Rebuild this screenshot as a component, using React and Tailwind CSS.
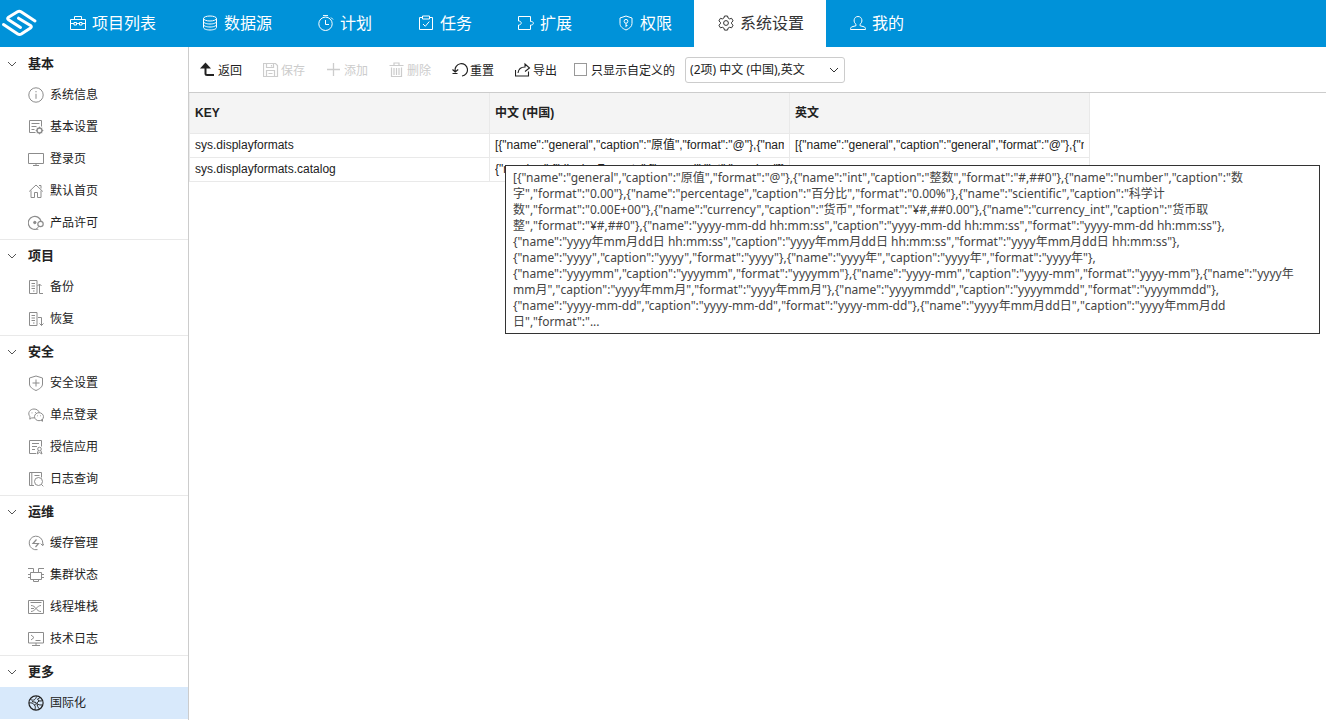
import React from "react";

const ICONS = {
  briefcase: (<><path d="M.5 4.500h15v10H.5zM4.500 4.500v-3h7v3M.5 8.500h3.500M6.500 8.500h3M12 8.500h3.500M4 7.500h2.500v2.500H4zM9.500 7.500H12v2.500H9.500z" /></>),
  database: (<><ellipse cx="8" cy="3.500" rx="6.500" ry="2.500" /><path d="M1.500 3.500v9c0 1.400 2.900 2.500 6.500 2.500s6.500-1.100 6.500-2.500v-9M1.500 6.500C1.500 7.900 4.400 9 8 9s6.500-1.100 6.500-2.500M1.500 9.500C1.500 10.900 4.400 12 8 12s6.500-1.100 6.500-2.500" /></>),
  timer: (<><circle cx="7.500" cy="8.800" r="6.700" /><path d="M5 .6h5M7.500 5v4.500H11M13 2.500l2 2" /></>),
  clipboard: (<><path d="M4.500 2.500h-3v12h13v-12h-3M4.500 1h7v3h-7zM5 9l2.300 2.300L11.300 6.500" /></>),
  plugin: (<><path d="M.5 6V1.500h12v5M12.500 10v4.500H.5V10M.5 6c3.600-.2 3.600 4.200 0 4M12.500 6.500c3.800-.7 3.800 4.200 0 3.500" /></>),
  shieldKey: (<><path d="M8 1l6 2v5.500c0 3-2.500 5-6 6.500-3.500-1.500-6-3.500-6-6.500V3z" /><circle cx="8" cy="6.300" r="1.900" /><path d="M8 8.200v4M8 10.500h1.500" /></>),
  gear: (<><path d="M6.500 1h3l.6 2 1.500.9 2-.6 1.500 2.600L13.600 7.300v1.500l1.500 1.400-1.500 2.600-2-.5-1.500.8-.6 2h-3l-.6-2-1.500-.8-2 .5L.9 10.200l1.500-1.400V7.300L.9 5.900l1.500-2.600 2 .6L5.900 3z" /><circle cx="8" cy="8" r="2.400" /></>),
  user: (<><path d="M6 9.300C3 7.500 3.500 1.500 8 1.500s5 6 2 7.800v1.400l4 1.100c1 .4 1.500 1 1.500 2.700H.5c0-1.700.5-2.300 1.500-2.700l4-1.100z" /></>),
  info: (<><circle cx="8" cy="8" r="7.200" /><path d="M8 6.800v5M8 4v1.300" /></>),
  form: (<><path d="M7.500 13.500H1.500V1.500h12v6M3.500 4.500h8M3.500 7.500h5M3.500 10.500h3" /><circle cx="11.500" cy="11.500" r="2.500" strokeWidth="1.400" /><path d="M11.500 7.700v1.500M11.500 13.800v1.500M7.700 11.500h1.500M13.800 11.500h1.500M8.900 8.900l1 1M13.100 13.100l1 1M14.100 8.900l-1 1M9.900 13.100l-1 1" /></>),
  monitor: (<><path d="M.5 2.500h15v10H.5zM8 12.500v2M5 14.500h6" /></>),
  home: (<><path d="M1.200 8.500L8 2l6.800 6.500M3 7.500V14.500h3.500v-5h3v5H13V7.500M11 2.500h2v3" /></>),
  license: (<><path d="M9 14A6.500 6.500 0 1 1 13 6" strokeWidth="1.200" /><circle cx="6.800" cy="7.500" r="1.200" fill="currentColor" /><circle cx="12.500" cy="9" r="2.700" strokeWidth="1.200" /><path d="M11 11.300L7.500 15M9 13.500l1.200 1.500" /></>),
  backup: (<><path d="M1.500 1.500H9v13H1.500zM3.500 4.500H7M3.500 7H7M3.500 9.500H7M5 12h1.500M11.500 5v9.500H15M9.500 7l2-2 2 2" /></>),
  restore: (<><path d="M1.500 1.500H9v13H1.500zM3.500 4.500H7M3.500 7H7M3.500 9.500H7M5 12h1.500M10 6.500h3.500v8M11.500 12.500l2 2 2-2" /></>),
  shieldPlus: (<><path d="M8 1l6.500 2v6c0 3-3 5-6.500 6.500C4.500 14 1.500 12 1.500 9V3zM8 4.500v7M4.500 8h7" /></>),
  chat: (<><path d="M6.500 10.800L3.500 11l-1.700 1.200.2-2.400C-1 6 2 2 6 2c2.700 0 4.800 1.500 5.300 3.700" /><ellipse cx="11" cy="9.700" rx="4.500" ry="4" /><path d="M13 13.300l1.500 1V12M4 5.500v.8M7.500 5v.8M9.500 8.500v.7M12.500 8.500v.7" /></>),
  cert: (<><path d="M8 14.500H1.500V1.500h12v6M4 4.500h7M4 7.500h5M4 10.500h3" /><circle cx="11.500" cy="10" r="1.800" /><path d="M10.300 11.500L9 15l2.500-1.500L14 15l-1.200-3.500" /></>),
  search: (<><path d="M6 14.500H1.500v-13h12v5M3.800 1.500v13M6.500 4.500h5" /><circle cx="10.500" cy="10.500" r="4" /><path d="M13.300 13.300L15.300 15.300" /></>),
  cache: (<><path d="M9.500 14.600A6.800 6.800 0 1 1 14.800 8v2.200M12.700 8.700l2 2 1.600-2" /><path d="M8.500 4.500L5 8.500h5.500L7.500 12" strokeWidth="1.200" /></>),
  cluster: (<><path d="M2.500 5.500h11v7h-11zM0 1.500h5.500v4M16 1.500h-5.500v4M0 7.500h2.500M13.500 7.500H16M0 10.500h2.500M13.500 10.500H16M5.500 12.500v2h5v-2" /></>),
  thread: (<><path d="M.5 1.500h15v13H.5zM2.500 3.500h11M3 6.500c5 0 5 6 10 6M3 12.500c4 0 6-6 10-6M3 9.500h3" /></>),
  terminal: (<><path d="M.5 1.500h15v10.500H.5zM8 12v3M4 14.500h8M3 4l3 2.500L3 9M7.500 9.500H12.500" /></>),
  globe: (<><circle cx="8" cy="8" r="7.100" strokeWidth="1.200" /><path d="M2.500 4.500c3 1.500 5 .5 6-3M1 8c2.500-.5 4 0 5.500 2s.5 3 .5 5M6.500 10L11 6c1.500 0 3 0 4-.5M9.500 4l1.500 2M4 6.500l4 1M9 8.500c1.500 1.500 3 1.500 5.500 1.500M9 8.500c0 2 1 4 2.500 5.500M12 2.500c-.8.800-1.500 1-2.500 1.500" /></>),
  save: (<><path d="M.5 1.500h12L14.500 3.500v11H.5zM3.500 1.500v4h7v-4M3.500 14.500v-6h8v6M8.500 3v1.500M5.500 11.500h4" strokeWidth="1.200" /></>),
  plus: (<path d="M7.500 1v13M1 7.500h13" strokeWidth="1.300" />),
  trash: (<><path d="M.5 3.500h14M5 3.500v-2.500h5v2.500M2.500 5.500v9h10v-9M5 6v7M7.500 6v7M10 6v7" strokeWidth="1.200" /></>),
  reset: (<><path d="M3.200 9A6.200 6.200 0 1 1 10 14M.5 7.500L3.200 10l3-2.500M.5 11.500h5" strokeWidth="1.200" /></>),
  share: (<><path d="M.5 8v6h13V9.500M3 11C3.500 7 6.500 5 10 5V2L14.500 6 10 9.500" strokeWidth="1.100" /></>),
};

function Icon({ name, className = "size-4" }) {
  return (
    <svg viewBox="0 0 16 16" fill="none" stroke="currentColor" strokeWidth="1" aria-hidden="true" className={`shrink-0 ${className}`}>
      {ICONS[name]}
    </svg>
  );
}

function BackIcon() {
  return (
    <svg viewBox="0 0 16 16" fill="none" aria-hidden="true" className="size-4 shrink-0">
      <path d="M5.500 5v6.500c0 1.200.6 1.500 1.600 1.500H14" stroke="currentColor" strokeWidth="2" />
      <path d="M5.500 .5L0 6.500h11z" fill="currentColor" />
    </svg>
  );
}

const NAV = [
  ["briefcase", "项目列表"],
  ["database", "数据源"],
  ["timer", "计划"],
  ["clipboard", "任务"],
  ["plugin", "扩展"],
  ["shieldKey", "权限"],
  ["gear", "系统设置"],
  ["user", "我的"],
];

const SECTIONS = [
  ["基本", [["info", "系统信息"], ["form", "基本设置"], ["monitor", "登录页"], ["home", "默认首页"], ["license", "产品许可"]]],
  ["项目", [["backup", "备份"], ["restore", "恢复"]]],
  ["安全", [["shieldPlus", "安全设置"], ["chat", "单点登录"], ["cert", "授信应用"], ["search", "日志查询"]]],
  ["运维", [["cache", "缓存管理"], ["cluster", "集群状态"], ["thread", "线程堆栈"], ["terminal", "技术日志"]]],
  ["更多", [["globe", "国际化"]]],
];

const ROWS = [
  [
    "sys.displayformats",
    '[{"name":"general","caption":"原值","format":"@"},{"name":"int","caption":"整数"}]',
    '[{"name":"general","caption":"general","format":"@"},{"name":"int","caption":"int"}]',
  ],
  [
    "sys.displayformats.catalog",
    '{"number":{"displayFormats":["general","int","number"]}}',
    "",
  ],
];

const DETAIL = [
  '[{"name":"general","caption":"原值","format":"@"},{"name":"int","caption":"整数","format":"#,##0"},{"name":"number","caption":"数',
  '字","format":"0.00"},{"name":"percentage","caption":"百分比","format":"0.00%"},{"name":"scientific","caption":"科学计',
  '数","format":"0.00E+00"},{"name":"currency","caption":"货币","format":"¥#,##0.00"},{"name":"currency_int","caption":"货币取',
  '整","format":"¥#,##0"},{"name":"yyyy-mm-dd hh:mm:ss","caption":"yyyy-mm-dd hh:mm:ss","format":"yyyy-mm-dd hh:mm:ss"},',
  '{"name":"yyyy年mm月dd日 hh:mm:ss","caption":"yyyy年mm月dd日 hh:mm:ss","format":"yyyy年mm月dd日 hh:mm:ss"},',
  '{"name":"yyyy","caption":"yyyy","format":"yyyy"},{"name":"yyyy年","caption":"yyyy年","format":"yyyy年"},',
  '{"name":"yyyymm","caption":"yyyymm","format":"yyyymm"},{"name":"yyyy-mm","caption":"yyyy-mm","format":"yyyy-mm"},{"name":"yyyy年',
  'mm月","caption":"yyyy年mm月","format":"yyyy年mm月"},{"name":"yyyymmdd","caption":"yyyymmdd","format":"yyyymmdd"},',
  '{"name":"yyyy-mm-dd","caption":"yyyy-mm-dd","format":"yyyy-mm-dd"},{"name":"yyyy年mm月dd日","caption":"yyyy年mm月dd',
  '日","format":"...',
];

function Header() {
  return (
    <header className="flex h-[47px] shrink-0 bg-[#0092d9] text-white">
      <a href="#" aria-label="Home" className="w-[46px]">
        <svg viewBox="0 0 40 47" fill="none" stroke="currentColor" strokeWidth="3" strokeLinecap="round" strokeLinejoin="round" aria-hidden="true" className="h-[47px] w-10">
          <path d="M35 21L21 11.800Q19.300 10.700 17.500 11.800L8.500 17.300Q6.800 18.500 8.500 19.700L20.500 27.500" />
          <path d="M3.500 24.500L17.800 34Q19.500 35.100 21.300 34L30.500 28Q32.200 26.800 30.500 25.500L18.500 18.200" />
        </svg>
      </a>
      <nav className="flex">
        {NAV.map(([icon, label]) => (
          <a
            key={label}
            href="#"
            className={`flex items-center gap-1 pr-[22px] pb-0.5 pl-6 text-base whitespace-nowrap ${label === "系统设置" ? "bg-white text-[#333]" : ""}`}
          >
            <span className="flex w-[18px]"><Icon name={icon} /></span>
            <span className="pb-0.5">{label}</span>
          </a>
        ))}
      </nav>
    </header>
  );
}

function Sidebar() {
  return (
    <aside className="w-[189px] shrink-0 border-r border-[#ccc] text-[#222]">
      {SECTIONS.map(([title, items], i) => (
        <section key={title}>
          <button
            type="button"
            className={`flex h-8 w-full items-center gap-2 border-t pl-1.5 text-[13px] font-bold ${i ? "border-[#e9e9e9]" : "border-transparent"}`}
          >
            <svg viewBox="0 0 12 12" fill="none" stroke="#555" aria-hidden="true" className="mr-0.5 size-3">
              <path d="M2 4l4 4 4-4" />
            </svg>
            <span className="pb-0.5">{title}</span>
          </button>
          <ul>
            {items.map(([icon, label]) => (
              <li key={label}>
                <a
                  href="#"
                  className={`flex h-8 items-center gap-1.5 pl-7 text-xs ${icon === "globe" ? "bg-[#d8e9fb]" : ""}`}
                >
                  <Icon name={icon} className={icon === "globe" ? "size-4 text-[#222]" : "size-4 text-[#8c8c8c]"} />
                  <span className="pb-0.5">{label}</span>
                </a>
              </li>
            ))}
          </ul>
        </section>
      ))}
    </aside>
  );
}

function ToolButton({ icon, label, disabled }) {
  return (
    <button type="button" disabled={disabled} className="flex items-center gap-0.5 whitespace-nowrap disabled:text-[#ccc]">
      {icon === "back" ? <BackIcon /> : <Icon name={icon} />}
      {label}
    </button>
  );
}

function Toolbar() {
  return (
    <div className="flex h-[46px] items-center border-b border-[#ccc] pl-[11px] text-xs text-[#222]">
      <div className="flex gap-[21px]">
        <ToolButton icon="back" label="返回" />
        <ToolButton icon="save" label="保存" disabled />
        <ToolButton icon="plus" label="添加" disabled />
        <ToolButton icon="trash" label="删除" disabled />
        <ToolButton icon="reset" label="重置" />
        <ToolButton icon="share" label="导出" />
      </div>
      <label className="ml-[17px] flex items-center gap-1 whitespace-nowrap">
        <input type="checkbox" className="size-[13px] appearance-none border border-[#999] bg-white" />
        只显示自定义的
      </label>
      <div className="relative ml-2.5">
        <select aria-label="语言" className="h-[26px] w-40 appearance-none rounded-[3px] border border-[#ccc] bg-white pl-1 font-[Noto_Sans,Noto_Sans_CJK_SC,sans-serif]">
          <option>(2项) 中文 (中国),英文</option>
        </select>
        <svg viewBox="0 0 12 12" fill="none" stroke="#333" aria-hidden="true" className="pointer-events-none absolute top-[7px] right-[5px] size-3">
          <path d="M2 4l4 4 4-4" />
        </svg>
      </div>
    </div>
  );
}

function Grid() {
  return (
    <table className="w-[901px] table-fixed border-separate border-spacing-0 border-l border-[#e9e9e9] text-left font-[Liberation_Sans,Noto_Sans_CJK_SC,sans-serif] text-xs text-[#222]">
      <thead>
        <tr className="h-[41px] bg-[#f4f4f4]">
          {["KEY", "中文 (中国)", "英文"].map((h) => (
            <th key={h} scope="col" className="border-r border-b border-[#e9e9e9] px-[5px] font-bold">{h}</th>
          ))}
        </tr>
      </thead>
      <tbody>
        {ROWS.map((row) => (
          <tr key={row[0]} className="h-6">
            {row.map((cell, i) => (
              <td key={i} className="border-r border-b border-[#e9e9e9] px-[5px] pb-0.5 leading-4">
                <div className="overflow-hidden whitespace-nowrap">{cell}</div>
              </td>
            ))}
          </tr>
        ))}
      </tbody>
    </table>
  );
}

export default function App() {
  return (
    <div className="flex min-h-screen flex-col bg-white font-[Noto_Sans_CJK_SC,sans-serif]">
      <Header />
      <div className="flex flex-1">
        <Sidebar />
        <main className="relative min-w-0 flex-1">
          <Toolbar />
          <Grid />
          <div
            role="tooltip"
            className="absolute top-[118px] right-1.5 left-[316px] border border-[#333] bg-white px-[7px] pt-1 pb-[3px] font-[Noto_Sans,Noto_Sans_CJK_SC,sans-serif] text-xs leading-4 whitespace-nowrap text-[#444]"
          >
            {DETAIL.map((line) => (
              <div key={line}>{line}</div>
            ))}
          </div>
        </main>
      </div>
    </div>
  );
}
